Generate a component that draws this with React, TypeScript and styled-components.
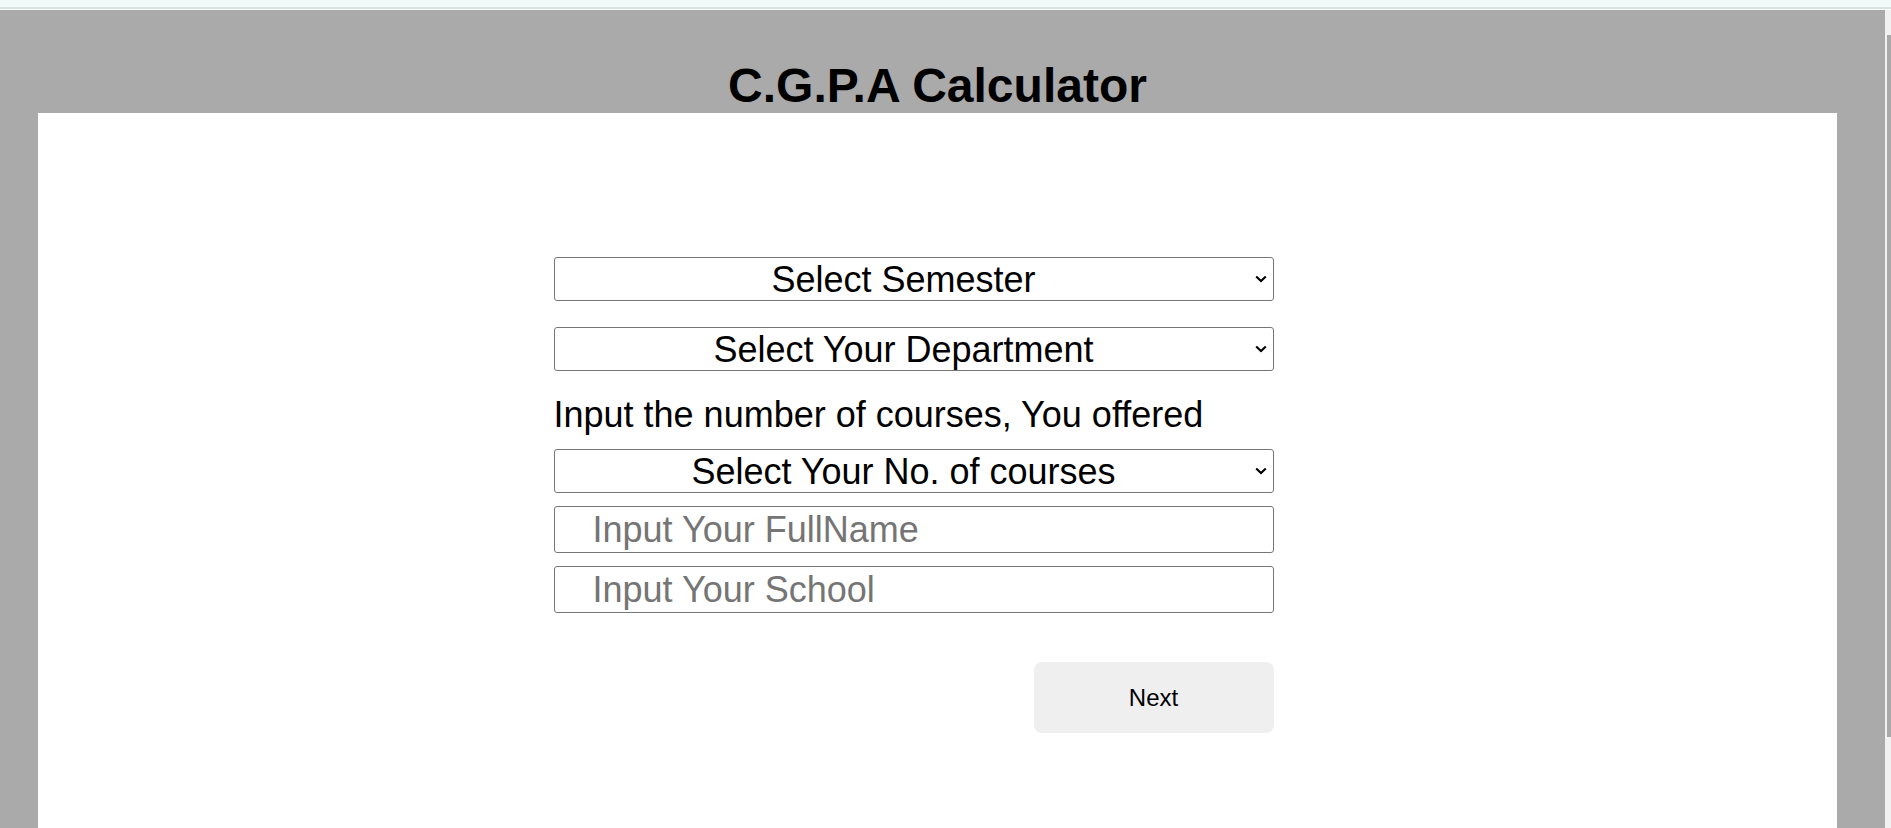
import React from 'react';
import styled, { createGlobalStyle } from 'styled-components';

const GlobalStyle = createGlobalStyle`
  html, body {
    margin: 0;
    padding: 0;
    overflow: hidden;
    background: #ffffff;
  }

  body {
    font-family: 'Liberation Sans', Arial, sans-serif;
    color: #000000;
  }

  * {
    box-sizing: border-box;
  }
`;

const semesters = ['First Semester', 'Second Semester'];
const departments = ['Computer Science', 'Mathematics', 'Physics', 'Chemistry'];
const courseCounts = [1, 2, 3, 4, 5, 6, 7, 8, 9, 10, 11, 12];

export default function App() {
  return (
    <>
      <GlobalStyle />
      <Page>
        <TopStrip />
        <Body>
          <Main>
            <Header>
              <Title>C.G.P.A Calculator</Title>
            </Header>
            <Card>
              <Form onSubmit={(e) => e.preventDefault()}>
                <SelectWrap>
                  <Select defaultValue="">
                    <option value="" disabled>
                      Select Semester
                    </option>
                    {semesters.map((s) => (
                      <option key={s}>{s}</option>
                    ))}
                  </Select>
                  <Chevron />
                </SelectWrap>

                <SelectWrap $gap={26}>
                  <Select defaultValue="">
                    <option value="" disabled>
                      Select Your Department
                    </option>
                    {departments.map((d) => (
                      <option key={d}>{d}</option>
                    ))}
                  </Select>
                  <Chevron />
                </SelectWrap>

                <Label>Input the number of courses, You offered</Label>

                <SelectWrap $gap={14}>
                  <Select defaultValue="">
                    <option value="" disabled>
                      Select Your No. of courses
                    </option>
                    {courseCounts.map((n) => (
                      <option key={n}>{n}</option>
                    ))}
                  </Select>
                  <Chevron />
                </SelectWrap>

                <TextInput type="text" placeholder="Input Your FullName" />
                <TextInput type="text" placeholder="Input Your School" />

                <Actions>
                  <NextButton type="submit">Next</NextButton>
                </Actions>
              </Form>
            </Card>
          </Main>
          <ScrollTrack>
            <ScrollThumb />
          </ScrollTrack>
        </Body>
      </Page>
    </>
  );
}

function Chevron() {
  return (
    <ChevronIcon width="12" height="8" viewBox="0 0 12 8" aria-hidden="true">
      <path d="M1.2 1.4 L6 6 L10.8 1.4" fill="none" stroke="#000" strokeWidth="2.1" />
    </ChevronIcon>
  );
}

const Page = styled.div`
  height: 828px;
  display: flex;
  flex-direction: column;
`;

const TopStrip = styled.div`
  height: 10px;
  flex-shrink: 0;
  background: #f2f9f9;
  border-bottom: 1px solid #fbfbfb;
  box-shadow: inset 0 -2px 0 #d8e2e2;
`;

const Body = styled.div`
  flex: 1;
  display: flex;
  min-height: 0;
`;

const Main = styled.div`
  flex: 1;
  display: flex;
  flex-direction: column;
  background: #aaaaaa;
  padding: 0 48px 0 38px;
`;

const Header = styled.header`
  padding: 49px 0 0;
`;

const Title = styled.h1`
  margin: 0;
  font-size: 48px;
  line-height: 54px;
  font-weight: bold;
  text-align: center;
`;

const Card = styled.section`
  flex: 1;
  background: #ffffff;
  padding: 144px 48px 0 0;
  display: flex;
  justify-content: center;
`;

const Form = styled.form`
  width: 720px;
  display: flex;
  flex-direction: column;
`;

const SelectWrap = styled.div<{ $gap?: number }>`
  position: relative;
  margin-top: ${(p) => p.$gap ?? 0}px;
`;

const Select = styled.select`
  appearance: none;
  width: 100%;
  height: 44px;
  margin: 0;
  padding: 0 20px 0 0;
  border: 1px solid #767676;
  border-radius: 3px;
  background: #ffffff;
  color: #000000;
  font-family: inherit;
  font-size: 36px;
  text-align: center;
  text-align-last: center;
  outline: none;
`;

const ChevronIcon = styled.svg`
  position: absolute;
  right: 7px;
  top: 50%;
  transform: translateY(-50%);
  pointer-events: none;
`;

const Label = styled.p`
  margin: 23px 0 0;
  font-size: 36px;
  line-height: 41px;
`;

const TextInput = styled.input`
  width: 100%;
  height: 47px;
  margin: 13px 0 0;
  padding: 0 10px 0 38px;
  border: 1px solid #767676;
  border-radius: 3px;
  font-family: inherit;
  font-size: 36px;
  color: #000000;
  outline: none;

  &::placeholder {
    color: #757575;
  }
`;

const Actions = styled.div`
  display: flex;
  justify-content: flex-end;
  margin-top: 49px;
`;

const NextButton = styled.button`
  width: 240px;
  height: 71px;
  border: none;
  border-radius: 8px;
  background: #efefef;
  color: #000000;
  font-family: inherit;
  font-size: 24px;
  cursor: pointer;
`;

const ScrollTrack = styled.div`
  width: 6px;
  flex-shrink: 0;
  background: #f1f1f1;
  padding: 25px 0 0 2px;
`;

const ScrollThumb = styled.div`
  width: 4px;
  height: 702px;
  background: #a9a9a9;
`;
